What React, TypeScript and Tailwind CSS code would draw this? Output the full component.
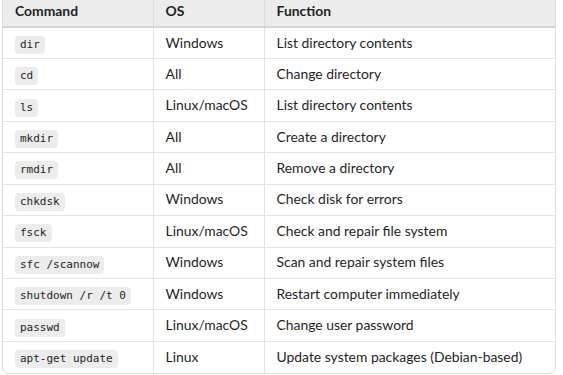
const rows: [string, string, string][] = [
  ['dir', 'Windows', 'List directory contents'],
  ['cd', 'All', 'Change directory'],
  ['ls', 'Linux/macOS', 'List directory contents'],
  ['mkdir', 'All', 'Create a directory'],
  ['rmdir', 'All', 'Remove a directory'],
  ['chkdsk', 'Windows', 'Check disk for errors'],
  ['fsck', 'Linux/macOS', 'Check and repair file system'],
  ['sfc /scannow', 'Windows', 'Scan and repair system files'],
  ['shutdown /r /t 0', 'Windows', 'Restart computer immediately'],
  ['passwd', 'Linux/macOS', 'Change user password'],
  ['apt-get update', 'Linux', 'Update system packages (Debian-based)'],
];

export default function App() {
  return (
    <div className="w-[563px] h-[375px] bg-white overflow-hidden font-['Lato',sans-serif] text-[13.9px] text-[#1f1f1f]">
      <div className="ml-[2px] w-[554px] border border-t-0 border-[#dcdcdc] rounded-b-[7px] overflow-hidden">
        <table className="w-full border-collapse table-fixed">
          <colgroup>
            <col className="w-[150px]" />
            <col className="w-[111px]" />
            <col />
          </colgroup>
          <thead>
            <tr className="bg-[#ececec] h-[27px] border-b-2 border-[#d4d4d4]">
              <th className="text-left font-bold px-[12px] pb-[3px]">Command</th>
              <th className="text-left font-bold px-[12px] pb-[3px] border-l border-[#dcdcdc]">OS</th>
              <th className="text-left font-bold px-[12px] pb-[3px] border-l border-[#dcdcdc]">Function</th>
            </tr>
          </thead>
          <tbody>
            {rows.map(([cmd, os, fn], i) => (
              <tr key={cmd} className={`h-[31.45px] ${i < rows.length - 1 ? 'border-b border-[#e3e3e3]' : ''}`}>
                <td className="px-[12px] pt-[1px]">
                  <code className="inline-block whitespace-nowrap rounded-[4px] bg-[#ececec] px-[5px] py-[2px] leading-[14px] text-[11px] font-['DejaVu_Sans_Mono',monospace] text-[#1f1f1f]">
                    {cmd}
                  </code>
                </td>
                <td className="px-[12px] whitespace-nowrap border-l border-[#e3e3e3]">{os}</td>
                <td className="px-[12px] whitespace-nowrap border-l border-[#e3e3e3]">{fn}</td>
              </tr>
            ))}
          </tbody>
        </table>
      </div>
    </div>
  );
}
